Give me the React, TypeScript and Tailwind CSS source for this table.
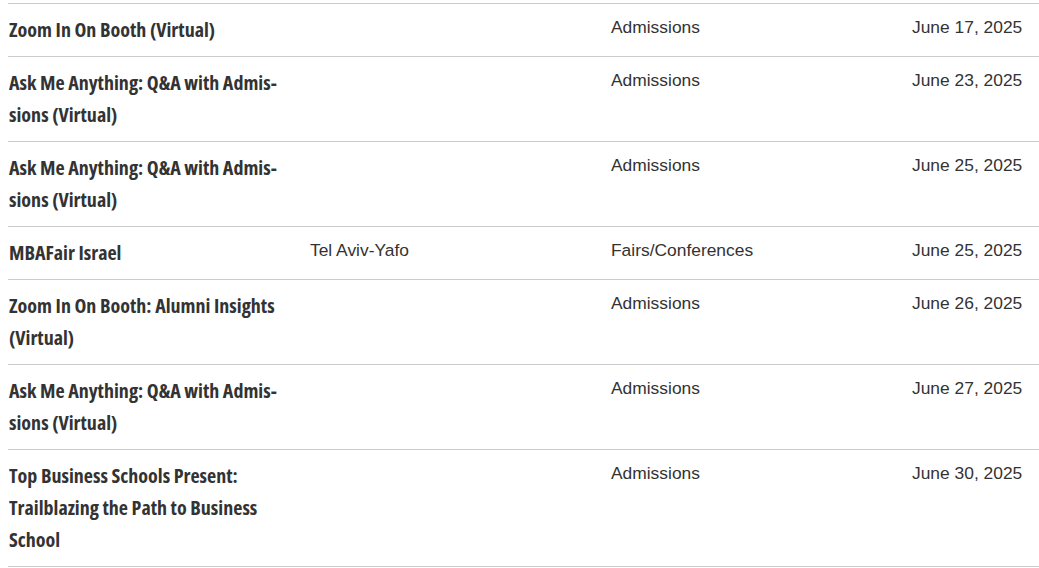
interface EventRow {
  title: string;
  location: string;
  category: string;
  date: string;
}

const events: EventRow[] = [
  { title: 'Zoom In On Booth (Virtual)', location: '', category: 'Admissions', date: 'June 17, 2025' },
  { title: 'Ask Me Anything: Q&A with Admis\u00ADsions (Virtual)', location: '', category: 'Admissions', date: 'June 23, 2025' },
  { title: 'Ask Me Anything: Q&A with Admis\u00ADsions (Virtual)', location: '', category: 'Admissions', date: 'June 25, 2025' },
  { title: 'MBAFair Israel', location: 'Tel Aviv-Yafo', category: 'Fairs/Conferences', date: 'June 25, 2025' },
  { title: 'Zoom In On Booth: Alumni Insights (Virtual)', location: '', category: 'Admissions', date: 'June 26, 2025' },
  { title: 'Ask Me Anything: Q&A with Admis\u00ADsions (Virtual)', location: '', category: 'Admissions', date: 'June 27, 2025' },
  { title: 'Top Business Schools Present: Trailblazing the Path to Business School', location: '', category: 'Admissions', date: 'June 30, 2025' },
];

export default function App() {
  return (
    <div className="bg-white min-h-screen pt-[3px] pl-2 overflow-hidden">
      <div className="border-t border-[#cbcbcb]">
        {events.map((ev, i) => (
          <div
            key={i}
            className="grid grid-cols-[301px_301px_301px_1fr] border-b border-[#cbcbcb] py-[10px] pl-px text-[#333]"
          >
            {/* Event name */}
            <div className="pr-[16px] text-[20px] leading-[32px] font-bold font-['Open_Sans',sans-serif] font-stretch-condensed [font-stretch:75%]">
              {ev.title}
            </div>
            <div className="pt-[1px] text-[17.4px] leading-[24px] font-['Liberation_Sans',Arial,sans-serif]">
              {ev.location}
            </div>
            <div className="pt-[1px] text-[17.4px] leading-[24px] font-['Liberation_Sans',Arial,sans-serif]">
              {ev.category}
            </div>
            <div className="pt-[1px] text-[17.4px] leading-[24px] font-['Liberation_Sans',Arial,sans-serif] whitespace-nowrap">
              {ev.date}
            </div>
          </div>
        ))}
      </div>
    </div>
  );
}
